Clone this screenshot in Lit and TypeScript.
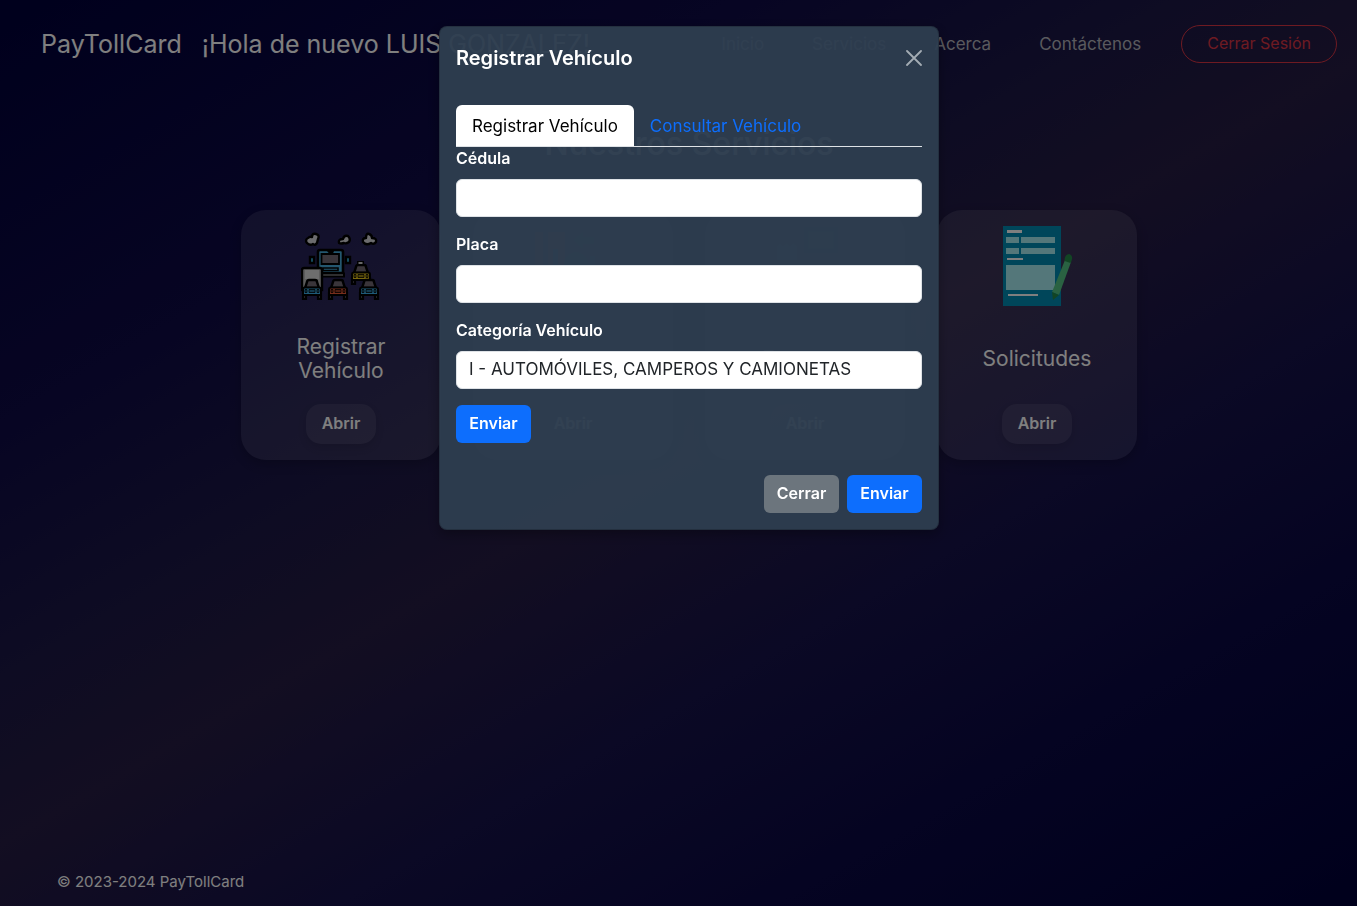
import { LitElement, html, css, svg } from "lit";
import { customElement, state } from "lit/decorators.js";

const cars = [
  { x: 50, y: 39, color: "#f0cc1c" },
  { x: 1, y: 54, color: "#3cb4ee" },
  { x: 27, y: 54, color: "#ee5c38" },
  { x: 58, y: 54, color: "#3cb4ee" },
];

const trafficIcon = html`
  <svg class="picture" viewBox="0 0 80 80" aria-hidden="true">
    <g stroke="#000" stroke-width="2.4" stroke-linejoin="round" fill="#d8d8dc">
      <path d="M6 17a3 3 0 0 1 1-5 4 4 0 0 1 4-1q0-4 4-3 4 1 2 5l-1 4q-2 3-4 1-3 2-6-1z" />
      <path d="M38 17q-1-4 4-4 1-4 5-3 3 3 1 6-3 2-5 1-3 1-5 0z" />
      <path d="M62 16q-1-4 3-4 0-5 3-4 3 1 3 4 5 0 4 4-2 3-5 1-5 3-8-1z" />
    </g>
    <path d="M9 31h4v6H9zM45 31h4v6h-4z" fill="#35b8e8" stroke="#000" stroke-width="2.4" />
    <path d="M17 26q0-2 2-2h21q2 0 2 2v21H17z" fill="#48aede" stroke="#000" stroke-width="2.6" />
    <path d="M20.500 28h17.500v10H20.500z" fill="#746a74" stroke="#000" stroke-width="1.8" />
    <path d="M26 25h7l-1 2.500h-4z" fill="#000" />
    <path d="M22 42h15v2.500H22z" fill="#48aede" stroke="#000" stroke-width="1.6" />
    <path d="M20 47.500h23v3H20z" fill="#b8b8bc" stroke="#000" stroke-width="2" />
    <path d="M1 44q0-2 2-2h16q2 0 2 2v20H1z" fill="#b8b8b8" stroke="#000" stroke-width="2.4" />
    <path d="M4 44h14v9H4z" fill="#dcdcdc" />
    ${cars.map(
      (car) => svg`
      <g transform=${`translate(${car.x} ${car.y})`}>
        <path d="M1 13h3v6H1zM16 13h3v6h-3z" fill="#55555a" stroke="#000" stroke-width="2.2" />
        <path d="M5 2q0-2 2-2h6q2 0 2 2l2 6H3z" fill="#746a74" stroke="#000" stroke-width="2.4" />
        <path d="M1 9.500q0-2 2-2h14q2 0 2 2V15H1z" fill=${car.color} stroke="#000" stroke-width="2" />
        <path d="M3 9.500h2v3H3zM15 9.500h2v3h-2zM7 9.500h6v3H7z" fill="#000" fill-opacity="0.35" stroke="#000" stroke-width="0.8" />
      </g>`
    )}
    <path d="M56 37h7" stroke="#000" stroke-width="4" />
    <path d="M57.500 37h4" stroke="#d0d0d0" stroke-width="2" />
  </svg>
`;

const transferIcon = html`
  <svg class="picture" viewBox="0 0 80 80" aria-hidden="true">
    <path d="M2 6h8v68H2z" fill="#703048" />
    <path d="M15 6h17v68H15z" fill="#803048" />
    <path d="M40 14l10-8v5h11v7H50v5z" fill="#206068" />
    <path d="M20 23h5v30h-5zM57 30h5v20h-5z" fill="#205870" />
    <circle cx="43" cy="38" r="12" fill="#206058" />
  </svg>
`;

const receiptIcon = html`
  <svg class="picture" viewBox="0 0 80 80" aria-hidden="true">
    <path d="M41 3h30v22H41z" fill="#285868" stroke="#204858" stroke-width="5" />
    <path d="M12 20l3-3 3 3 4-3 3 3 3-3 4 3v18H12z" fill="#486070" />
    <path d="M4 34h70v30H4z" fill="#283848" />
  </svg>
`;

const formIcon = html`
  <svg class="picture" viewBox="0 0 80 80" aria-hidden="true">
    <path d="M6 0h58v80H6z" fill="#008cb4" />
    <path d="M10 4h15v3H10zM10 32h16v2H10zM11 68h30v2H11z" fill="#fff" />
    <path d="M9 11h13v6H9zM24 11h34v6H24zM9 22h13v6H9zM24 22h34v6H24zM9 39h49v25H9z" fill="#a8eef4" />
    <path d="M68 34l6 2-12 33-7-3z" fill="#54c484" />
    <path d="M67.500 35q0-7 5-7 4 2 2 7l-1 2z" fill="#248a48" />
    <path d="M55 66l7 3-6 5z" fill="#248a48" />
  </svg>
`;

const cards = [
  { title: "Registrar Vehículo", icon: trafficIcon },
  { title: "Recargas", icon: transferIcon },
  { title: "Facturas", icon: receiptIcon },
  { title: "Solicitudes", icon: formIcon },
];

@customElement("app-root")
export class AppRoot extends LitElement {
  @state() private tab = "registrar";

  static styles = css`
    :host {
      display: block;
      font-family: Inter, "Open Sans", sans-serif;
      font-size: 16px;
      line-height: 24px;
      color: #fff;
    }
    * {
      box-sizing: border-box;
    }
    button,
    input,
    select {
      font: inherit;
    }
    .page {
      min-height: 100vh;
      display: flex;
      flex-direction: column;
      background: linear-gradient(150deg, #00003a, #0e0a46 25%, #1c1846 40%, #261c44 50%, #16124a 65%, #0a0844 80%, #000038);
    }
    .bar {
      display: flex;
      align-items: center;
      padding: 25px 20px 0 41px;
      height: 63px;
    }
    .brand {
      font-size: 25px;
      white-space: nowrap;
      color: #fff;
      text-decoration: none;
    }
    .hello {
      font-size: 25px;
      white-space: nowrap;
      margin-left: 20px;
    }
    .links {
      display: flex;
      gap: 48px;
      margin-left: auto;
      font-size: 17px;
    }
    .link {
      color: #b4b4bc;
      text-decoration: none;
    }
    .logout {
      height: 38px;
      margin-left: 40px;
      padding: 0 25px 2px;
      border: 1px solid #dc3545;
      border-radius: 20px;
      color: #dc3545;
      background: none;
    }
    .heading {
      margin: 62px 0 0;
      padding-left: 21px;
      text-align: center;
      font-size: 32px;
      line-height: 38px;
      font-weight: 500;
    }
    .cards {
      display: flex;
      justify-content: center;
      gap: 32px;
      margin-top: 47px;
      padding-left: 21px;
    }
    .card {
      width: 200px;
      height: 250px;
      padding: 16px;
      border-radius: 25px;
      background: rgba(255, 255, 255, 0.1);
      box-shadow: 0 4px 12px rgba(0, 0, 0, 0.2);
      display: flex;
      flex-direction: column;
      align-items: center;
    }
    .picture {
      width: 80px;
      height: 80px;
      flex: none;
    }
    .title {
      flex: 1;
      display: flex;
      align-items: center;
      margin: 8px 16px 0;
      font-size: 21px;
      line-height: 24px;
      font-weight: 400;
      text-align: center;
    }
    .open {
      height: 40px;
      min-width: 70px;
      padding: 0 15px 2px;
      border: 0;
      border-radius: 15px;
      background: rgba(255, 255, 255, 0.08);
      box-shadow: 0 4px 8px rgba(0, 0, 0, 0.1);
      color: #fff;
      font-weight: 600;
    }
    .foot {
      margin-top: auto;
      padding: 0 57px 14px;
      font-size: 15px;
      line-height: 20px;
    }
    .backdrop {
      position: fixed;
      inset: 0;
      background: rgba(0, 0, 0, 0.5);
      display: flex;
      justify-content: center;
      align-items: flex-start;
      padding: 26px 0 26px 21px;
      overflow: auto;
    }
    .modal {
      width: 500px;
      border: 1px solid rgba(0, 0, 0, 0.18);
      border-radius: 8px;
      background: rgba(46, 62, 80, 0.95);
      box-shadow: 0 4px 12px rgba(0, 0, 0, 0.3);
    }
    .top {
      display: flex;
      align-items: center;
      justify-content: space-between;
      padding: 16px;
    }
    .name {
      margin: 0;
      font-size: 20px;
      line-height: 30px;
      font-weight: 600;
    }
    .close {
      width: 16px;
      height: 16px;
      padding: 0;
      border: 0;
      background: none;
      color: #a4acb4;
    }
    .cross {
      display: block;
      width: 16px;
      height: 16px;
    }
    .body {
      padding: 16px;
    }
    .tabs {
      display: flex;
      border-bottom: 1px solid #dee2e6;
    }
    .tab {
      height: 41px;
      padding: 0 16px;
      border: 0;
      border-radius: 6px 6px 0 0;
      background: none;
      color: #0d6efd;
      font-size: 17px;
      white-space: nowrap;
    }
    .tab.on {
      background: #fff;
      color: #000;
    }
    .field {
      margin-bottom: 16px;
    }
    .label {
      display: block;
      margin-bottom: 10px;
      font-weight: 600;
      line-height: 22px;
    }
    .control {
      display: block;
      appearance: none;
      width: 100%;
      height: 38px;
      padding: 0 12px 2px;
      border: 1px solid #dee2e6;
      border-radius: 6px;
      background: #fff;
      color: #212529;
      font-size: 17px;
    }
    .btn {
      height: 38px;
      min-width: 75px;
      padding: 0 12px 2px;
      border: 0;
      border-radius: 6px;
      color: #fff;
      font-weight: 600;
      background: #0d6efd;
    }
    .btn.gray {
      background: #6c757d;
    }
    .bottom {
      display: flex;
      justify-content: flex-end;
      gap: 8px;
      padding: 16px;
    }
  `;

  render() {
    return html`
      <div class="page">
        <header class="bar">
          <a class="brand" href="#">PayTollCard</a>
          <span class="hello">¡Hola de nuevo LUIS GONZALEZ!</span>
          <nav class="links">
            ${["Inicio", "Servicios", "Acerca", "Contáctenos"].map(
              (t) => html`<a class="link" href="#">${t}</a>`
            )}
          </nav>
          <button class="logout">Cerrar Sesión</button>
        </header>
        <main>
          <h1 class="heading">Nuestros Servicios</h1>
          <section class="cards">
            ${cards.map(
              (c) => html`
                <article class="card">
                  ${c.icon}
                  <h2 class="title">${c.title}</h2>
                  <button class="open">Abrir</button>
                </article>
              `
            )}
          </section>
        </main>
        <footer class="foot">© 2023-2024 PayTollCard</footer>
      </div>
      <div class="backdrop">
        <section class="modal" role="dialog" aria-modal="true" aria-labelledby="name">
          <div class="top">
            <h2 class="name" id="name">Registrar Vehículo</h2>
            <button class="close" aria-label="Cerrar">
              <svg class="cross" viewBox="0 0 16 16">
                <path d="M1 1l14 14M15 1L1 15" stroke="currentColor" stroke-width="1.8" stroke-linecap="round" />
              </svg>
            </button>
          </div>
          <form class="body" @submit=${(e: Event) => e.preventDefault()}>
            <div class="tabs" role="tablist">
              ${[
                ["registrar", "Registrar Vehículo"],
                ["consultar", "Consultar Vehículo"],
              ].map(
                ([id, label]) => html`
                  <button type="button" role="tab" class=${this.tab === id ? "tab on" : "tab"} @click=${() => (this.tab = id)}>${label}</button>
                `
              )}
            </div>
            <div class="field">
              <label class="label" for="cedula">Cédula</label>
              <input class="control" id="cedula" type="text" />
            </div>
            <div class="field">
              <label class="label" for="placa">Placa</label>
              <input class="control" id="placa" type="text" />
            </div>
            <div class="field">
              <label class="label" for="categoria">Categoría Vehículo</label>
              <select class="control" id="categoria">
                <option>I - AUTOMÓVILES, CAMPEROS Y CAMIONETAS</option>
              </select>
            </div>
            <button class="btn">Enviar</button>
          </form>
          <div class="bottom">
            <button class="btn gray">Cerrar</button>
            <button class="btn">Enviar</button>
          </div>
        </section>
      </div>
    `;
  }
}
